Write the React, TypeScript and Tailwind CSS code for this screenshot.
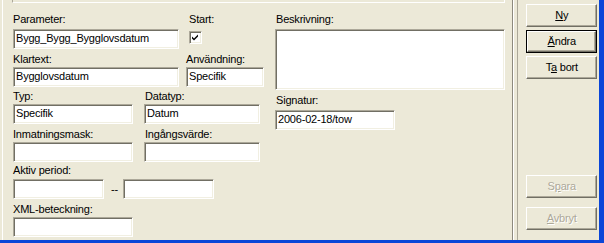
import React from 'react';

const SUNKEN =
  'border border-t-[#aca899] border-l-[#aca899] border-b-white border-r-white shadow-[inset_1px_1px_0_#716f64,inset_-1px_-1px_0_#f1efe2]';

function Label({ children, className = '' }: { children: React.ReactNode; className?: string }) {
  return <div className={`h-[13px] leading-[13px] whitespace-nowrap ${className}`}>{children}</div>;
}

function Field({ value = '', width, className = '' }: { value?: string; width: number; className?: string }) {
  return (
    <div
      className={`h-[20px] bg-white pl-[2px] leading-[16px] whitespace-nowrap overflow-hidden ${SUNKEN} ${className}`}
      style={{ width }}
    >
      {value}
    </div>
  );
}

function Btn({
  children, isDefault = false, disabled = false, className = '',
}: { children: React.ReactNode; isDefault?: boolean; disabled?: boolean; className?: string }) {
  const face = (
    <div
      className={`flex-1 flex items-center justify-center border border-t-white border-l-white border-b-[#716f64] border-r-[#716f64] shadow-[inset_-1px_-1px_0_#aca899] ${
        disabled ? 'text-[#aca899] [text-shadow:1px_1px_0_#fff]' : 'text-black'
      }`}
    >
      {children}
    </div>
  );
  return (
    <div className={`w-[71px] h-[23px] flex bg-[#ece9d8] ${isDefault ? 'border border-black' : ''} ${className}`}>
      {face}
    </div>
  );
}

function CheckBox() {
  return (
    <div className={`w-[13px] h-[13px] bg-white ${SUNKEN}`}>
      <svg width="11" height="11" viewBox="-1 -1 11 11" className="block">
        <path d="M1 3.5 L3 5.5 L7 1.5 L7 3.5 L3 7.5 L1 5.5 Z" fill="#000" />
      </svg>
    </div>
  );
}

export default function App() {
  return (
    <div className="w-[604px] h-[243px] bg-[#ece9d8] flex flex-col overflow-hidden font-['Liberation_Sans',Arial,sans-serif] text-[11px] tracking-[-0.2px] text-black">
      <div className="h-[240px] flex">
        {/* form area */}
        <div className="w-[512px] flex flex-col border-l border-l-white ml-[2px]">
          <div className="ml-[9px] w-[493px] h-[3px] border-l border-l-[#aca899] border-r border-r-white border-b border-b-white" />
          <div className="flex pl-[10px] pt-[10px]">
            <div className="w-[252px] flex flex-col">
              <div className="flex">
                <div className="w-[173px] flex flex-col">
                  <Label>Parameter:</Label>
                  <Field value="Bygg_Bygg_Bygglovsdatum" width={166} className="mt-[3px]" />
                  <Label className="mt-[4px]">Klartext:</Label>
                  <Field value="Bygglovsdatum" width={166} className="mt-[1px]" />
                </div>
                <div className="flex flex-col">
                  <Label className="pl-[3px]">Start:</Label>
                  <div className="mt-[5px] ml-[3px]">
                    <CheckBox />
                  </div>
                  <Label className="mt-[9px]">Användning:</Label>
                  <Field value="Specifik" width={78} className="mt-[1px]" />
                </div>
              </div>
              <div className="flex mt-[3px]">
                <div className="w-[131px] flex flex-col">
                  <Label>Typ:</Label>
                  <Field value="Specifik" width={120} className="mt-[1px]" />
                  <Label className="mt-[4px]">Inmatningsmask:</Label>
                  <Field width={120} className="mt-[1px]" />
                </div>
                <div className="flex flex-col">
                  <Label className="pl-[1px]">Datatyp:</Label>
                  <Field value="Datum" width={116} className="mt-[1px]" />
                  <Label className="mt-[4px] pl-[1px]">Ingångsvärde:</Label>
                  <Field width={116} className="mt-[1px]" />
                </div>
              </div>
              <Label className="mt-[2px]">Aktiv period:</Label>
              <div className="flex items-center mt-[2px]">
                <Field width={91} />
                <span className="w-[19px] pl-[7px]">--</span>
                <Field width={91} />
              </div>
              <Label className="mt-[4px]">XML-beteckning:</Label>
              <Field width={120} className="mt-[1px]" />
            </div>
            <div className="ml-[10px] flex flex-col">
              <Label className="pl-[1px]">Beskrivning:</Label>
              <div className={`w-[230px] h-[61px] bg-white mt-[3px] ${SUNKEN}`} />
              <Label className="mt-[4px] pl-[1px]">Signatur:</Label>
              <Field value="2006-02-18/tow" width={120} className="mt-[3px]" />
            </div>
          </div>
        </div>

        {/* divider */}
        <div className="w-[6px] border-l border-l-[#8d8a7e] border-r border-r-[#aca899] shadow-[inset_1px_0_0_#fff]" />

        {/* button column */}
        <div className="w-[81px] flex flex-col pl-[8px] pt-[4px] pb-[10px]">
          <Btn><span><span className="underline">N</span>y</span></Btn>
          <Btn isDefault className="mt-[3px]"><span><span className="underline">Ä</span>ndra</span></Btn>
          <Btn className="mt-[3px]"><span>T<span className="underline">a</span> bort</span></Btn>
          <div className="flex-1" />
          <Btn disabled><span>S<span className="underline">p</span>ara</span></Btn>
          <Btn disabled className="mt-[9px]"><span><span className="underline">A</span>vbryt</span></Btn>
        </div>
        <div className="w-[5px] bg-[#0a46d8]" />
      </div>
      <div className="h-[3px] bg-[#0a46d8]" />
    </div>
  );
}
